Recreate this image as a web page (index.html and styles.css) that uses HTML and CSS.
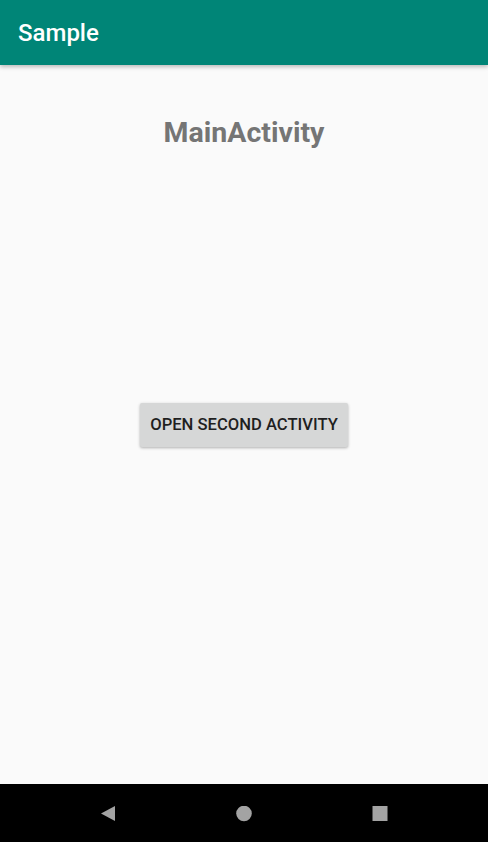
FILE: index.html
```html
<!DOCTYPE html>
<html>
<head>
<meta charset="utf-8">
<link rel="stylesheet" href="styles.css">
</head>
<body>
<div class="screen">
  <header class="appbar"><span class="appbar-title">Sample</span></header>
  <main class="content">
    <h1 class="heading">MainActivity</h1>
    <button class="btn">OPEN SECOND ACTIVITY</button>
  </main>
  <nav class="navbar">
    <svg class="nav-icon" width="16" height="16" viewBox="0 0 16 16"><polygon points="15,0 15,15 1,7.5" fill="#a3a3a3"/></svg>
    <svg class="nav-icon" width="16" height="16" viewBox="0 0 16 16"><circle cx="8" cy="7.5" r="7.8" fill="#a3a3a3"/></svg>
    <svg class="nav-icon" width="16" height="16" viewBox="0 0 16 16"><rect x="0.5" y="0" width="15" height="15" fill="#a3a3a3"/></svg>
  </nav>
</div>
</body>
</html>
```
FILE: styles.css
```css
html, body {
  margin: 0;
  padding: 0;
}
body {
  font-family: Roboto, "Liberation Sans", sans-serif;
  background: #fafafa;
}
.screen {
  width: 488px;
  height: 842px;
  display: flex;
  flex-direction: column;
}
.appbar {
  height: 65px;
  flex: none;
  background: #008577;
  display: flex;
  align-items: center;
  padding-left: 18px;
  box-shadow: 0 2px 4px rgba(0,0,0,0.25);
  position: relative;
  z-index: 1;
}
.appbar-title {
  color: #ffffff;
  font-size: 24px;
  font-weight: 500;
}
.content {
  flex: 1;
  display: grid;
  background: #fafafa;
}
.heading {
  grid-area: 1 / 1;
  align-self: start;
  justify-self: center;
  margin: 51px 0 0;
  font-size: 28.5px;
  font-weight: 700;
  color: #757575;
}
.btn {
  grid-area: 1 / 1;
  align-self: center;
  justify-self: center;
  width: 208px;
  height: 44px;
  border: none;
  border-radius: 2px;
  background: #d6d7d7;
  color: #1f1f1f;
  font-family: Roboto, "Liberation Sans", sans-serif;
  font-size: 16.6px;
  font-weight: 500;
  box-shadow: 0 1px 3px rgba(0,0,0,0.3);
  padding: 0;
}
.navbar {
  height: 58px;
  flex: none;
  background: #000000;
  display: flex;
  align-items: center;
  justify-content: center;
  gap: 120px;
}
.nav-icon {
  display: block;
  margin-top: 1px;
}
```
